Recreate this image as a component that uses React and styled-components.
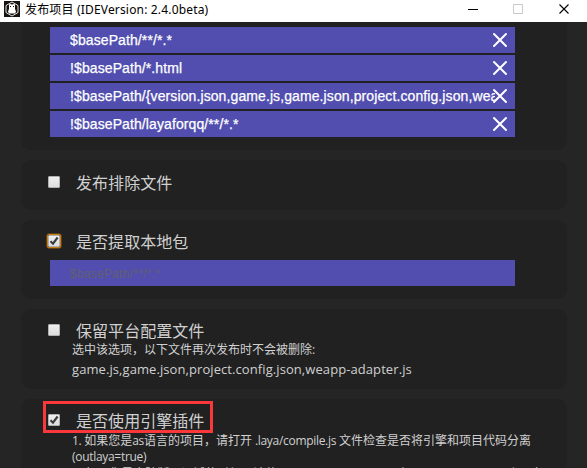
import React from 'react';
import styled, { createGlobalStyle, css } from 'styled-components';

const Global = createGlobalStyle`
  * { box-sizing: border-box; }
  body { margin: 0; background: #252525; overflow: hidden; }
`;

const Window = styled.div`
  width: 587px;
  height: 468px;
  overflow: hidden;
  display: flex;
  flex-direction: column;
  background: #252525;
  color: #d0d0d0;
  font-family: 'Open Sans', 'Noto Sans CJK SC', sans-serif;
`;

const TitleBar = styled.header`
  flex: 0 0 22px;
  display: flex;
  align-items: center;
  background: #fff;
  color: #000;
  padding-left: 4px;
`;

const Title = styled.h1`
  flex: 1;
  margin: 0 0 3px 5px;
  font: 12px/16px 'Noto Sans', 'Noto Sans CJK SC', sans-serif;
  letter-spacing: 0.17px;
  white-space: nowrap;
`;

const Logo = styled.svg`
  width: 16px;
  height: 16px;
  margin-bottom: 4px;
`;

const WindowControls = styled.svg`
  width: 106px;
  height: 12px;
  margin: 0 15px 4px 0;
`;

const Content = styled.main`
  flex: 1;
  min-height: 0;
  overflow: hidden;
  padding: 0 20px 0 21px;
  display: flex;
  flex-direction: column;
  gap: 10px;
`;

const Card = styled.section`
  flex: 0 0 ${(p) => p.$height}px;
  padding: ${(p) => p.$top}px 52px 0 29px;
  background: #212121;
  border-radius: ${(p) => (p.$continued ? '0 0 10px 10px' : '10px')};
`;

const PatternList = styled.div`
  display: grid;
  grid-template-columns: minmax(0, 1fr);
  gap: 2px;
`;

const Pattern = styled.div`
  display: flex;
  align-items: center;
  position: relative;
  height: 26px;
  padding: 0 20px;
  background: #514eaf;
  color: #fff;
  font: 14px/26px 'Liberation Sans', Arial, sans-serif;
  letter-spacing: 0.1px;
  -webkit-text-stroke: 0.25px #fff;
  ${(p) => p.$placeholder && css`
    margin-top: ${p.$gap}px;
    padding-top: 1px;
    color: #625f70;
    font-size: 12px;
    letter-spacing: 0.25px;
    -webkit-text-stroke: 0;
  `}
`;

const PatternText = styled.span`
  flex: 1;
  min-width: 0;
  overflow: hidden;
  white-space: nowrap;
`;

const Remove = styled.svg`
  position: absolute;
  right: 7px;
  top: 5px;
  width: 16px;
  height: 16px;
`;

const OptionRow = styled.label`
  display: flex;
  align-items: center;
  height: 24px;
  margin-left: -3px;
  gap: 15px;
`;

const CheckInput = styled.span`
  display: grid;
  place-items: center;
  width: 14px;
  height: 14px;
  margin-bottom: ${(p) => p.$lift || 0}px;
  border-radius: 2px;
  box-shadow: ${(p) => (p.$focused ? 'inset 0 0 0 1px #c47f14, 0 0 0 0.5px #9a620e' : 'none')};
`;

const CheckFace = styled.span`
  display: block;
  width: 12px;
  height: 12px;
  border: 1px solid #b0b0b0;
  border-radius: 1px;
  background: linear-gradient(#efefef, #dcdcdc);
`;

const Tick = styled.svg`
  display: block;
  width: 10px;
  height: 10px;
`;

const OptionLabel = styled.span`
  font-size: 16px;
  line-height: 24px;
  letter-spacing: 0.05px;
  white-space: nowrap;
`;

const Note = styled.p`
  margin: ${(p) => p.$offset || 0}px -40px 0 22px;
  font-size: ${(p) => p.$size || 12}px;
  line-height: ${(p) => p.$line || 16}px;
  letter-spacing: ${(p) => p.$spacing || 0}px;
  white-space: nowrap;
`;

const Latin = styled.span`
  letter-spacing: -0.3px;
`;

const Highlight = styled.div`
  width: 170px;
  height: 32px;
  margin-left: -7px;
  padding: 5px 0 0 4px;
  border: 3px solid #fa383b;
`;

function Checkbox({ checked, focused, lift }) {
  return (
    <CheckInput $focused={focused} $lift={lift} role="checkbox" aria-checked={!!checked}>
      <CheckFace>
        {checked && (
          <Tick viewBox="0 0 10 10">
            <path d="M1.5 5.2 4 7.7 8.6 1.5" fill="none" stroke="#3b3b3b" strokeWidth="2.1" />
          </Tick>
        )}
      </CheckFace>
    </CheckInput>
  );
}

function Option({ label, ...check }) {
  return (
    <OptionRow>
      <Checkbox {...check} />
      <OptionLabel>{label}</OptionLabel>
    </OptionRow>
  );
}

const patterns = [
  '$basePath/**/*.*',
  '!$basePath/*.html',
  '!$basePath/{version.json,game.js,game.json,project.config.json,weapp-adapter.js}',
  '!$basePath/layaforqq/**/*.*',
];

export default function App() {
  return (
    <>
      <Global />
      <Window>
        <TitleBar>
          <Logo viewBox="0 0 16 16">
            <path d="M0 0h16v16H0z" fill="#17120f" />
            <path d="M8 1 14 4.5v7L8 15l-6-3.5v-7Z" fill="none" stroke="#fff" strokeWidth="0.9" />
            <path d="M5 3.5 6 3l2 .5 2-.5 1 .5V8l1 2.5-1 2H5l-1-2L5 8Z" fill="#fff" />
            <path d="M6 5h1v1H6zM9 5h1v1H9z" fill="#17120f" />
          </Logo>
          <Title>发布项目 (IDEVersion: 2.4.0beta)</Title>
          <WindowControls viewBox="0 0 106 12" fill="none">
            <path d="M2 6.5h10" stroke="#000" />
            <path d="M47.5 1.5h9v9h-9z" stroke="#c8c8c8" />
            <path d="m93.5 1.5 9 9m0-9-9 9" stroke="#000" strokeWidth="1.1" />
          </WindowControls>
        </TitleBar>
        <Content>
          <Card $height={128} $top={5} $continued>
            <PatternList>
              {patterns.map((pattern) => (
                <Pattern key={pattern}>
                  <PatternText>{pattern}</PatternText>
                  <Remove viewBox="0 0 16 16">
                    <path d="m2 2 12 12m0-12L2 14" stroke="#fff" strokeWidth="2" strokeLinecap="round" />
                  </Remove>
                </Pattern>
              ))}
            </PatternList>
          </Card>
          <Card $height={50} $top={11}>
            <Option label="发布排除文件" lift={2} />
          </Card>
          <Card $height={79} $top={10}>
            <Option label="是否提取本地包" focused checked lift={2} />
            <Pattern $placeholder $gap={6}>
              <PatternText>$basePath/**/*.*</PatternText>
            </Pattern>
          </Card>
          <Card $height={80} $top={10}>
            <Option label="保留平台配置文件" lift={3} />
            <Note $line={14}>选中该选项，以下文件再次发布时不会被删除:</Note>
            <Note $size={13} $line={24} $spacing={0.08}>
              game.js,game.json,project.config.json,weapp-adapter.js
            </Note>
          </Card>
          <Card $height={150} $top={2}>
            <Highlight>
              <Option label="是否使用引擎插件" checked lift={3} />
            </Highlight>
            <Note>
              <Latin>1. </Latin>如果您是<Latin>as</Latin>语言的项目，请打开
              <Latin> .laya/compile.js </Latin>文件检查是否将引擎和项目代码分离
            </Note>
            <Note>
              <Latin>(outlaya=true)</Latin>
            </Note>
            <Note $offset={1}>
              2. 如果您是大陆版，调试的时候，请使用 LayaAirIDE 2.2.0 以上 (engine plugin) 以便更好用
            </Note>
          </Card>
        </Content>
      </Window>
    </>
  );
}
